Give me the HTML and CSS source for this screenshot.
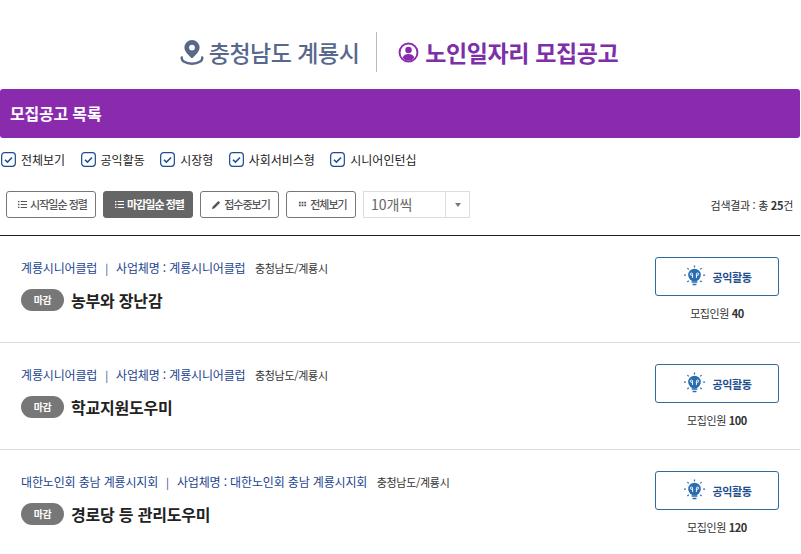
FILE: index.html
```html
<!DOCTYPE html>
<html lang="ko">
<head>
<meta charset="utf-8">
<title>모집공고</title>
<link rel="stylesheet" href="styles.css">
</head>
<body>
<svg class="defs" width="0" height="0">
  <symbol id="bulb" viewBox="0 0 24 24">
    <circle cx="12" cy="10.500" r="6.600" fill="#2a6db0"/>
    <path d="M9 17h6v1.600H9zM10 19.500h4V21h-4z" fill="#2a6db0"/>
    <path d="M10 13.500V9.500a1.200 1.200 0 1 0-1.600 1.200H10M14 13.500V9.500a1.200 1.200 0 1 1 1.600 1.200H14" fill="none" stroke="#fff" stroke-width="1"/>
    <path d="M12 0.500v2M4.600 3.200l1.400 1.400M19.400 3.200L18 4.600M1 10.500h2M21 10.500h2M4.600 17.800L6 16.400M19.400 17.800L18 16.400" stroke="#2a6db0" stroke-width="1.300" fill="none"/>
  </symbol>
  <symbol id="check" viewBox="0 0 16 16">
    <rect x="0.700" y="0.700" width="14.600" height="14.600" rx="3.200" fill="#fff" stroke="#1f4e8f" stroke-width="1.300"/>
    <path d="M4.200 8.200l2.700 2.600 4.900-5" fill="none" stroke="#1f4e8f" stroke-width="1.600"/>
  </symbol>
  <symbol id="listic" viewBox="0 0 10 10">
    <path d="M0 1h1.600v1.400H0zM0 4.300h1.600v1.400H0zM0 7.600h1.600V9H0zM3 1.200h7v1H3zM3 4.500h7v1H3zM3 7.800h7v1H3z" fill="currentColor"/>
  </symbol>
</svg>

<header class="title">
  <div class="region">
    <svg class="pin" viewBox="0 0 24 26" width="24" height="26">
      <path fill-rule="evenodd" d="M12 1a7.600 7.600 0 0 0-7.600 7.600c0 4.600 5 8.400 7.600 10.900 2.600-2.500 7.600-6.300 7.600-10.900A7.600 7.600 0 0 0 12 1zm0 4.700a2.900 2.900 0 1 1 0 5.800 2.900 2.900 0 0 1 0-5.800z" fill="#58688c"/>
      <path d="M1.800 18.500c-.8 3.200 3.700 6.200 10.200 6.200s11-3 10.200-6.200" fill="none" stroke="#58688c" stroke-width="2.400" stroke-linecap="round"/>
    </svg>
    <span>충청남도 계룡시</span>
  </div>
  <div class="divider"></div>
  <div class="notice">
    <svg class="person" viewBox="0 0 22 22" width="21" height="21">
      <circle cx="11" cy="11" r="9.400" fill="none" stroke="#8a2bae" stroke-width="2"/>
      <circle cx="11" cy="8.400" r="3.400" fill="#8a2bae"/>
      <path d="M4.800 16.500c1-3 3.400-4 6.200-4s5.200 1 6.200 4a8 8 0 0 1-12.400 0z" fill="#8a2bae"/>
    </svg>
    <span>노인일자리 모집공고</span>
  </div>
</header>

<h1 class="banner">모집공고 목록</h1>

<div class="filters">
  <label class="filter"><svg class="cb"><use href="#check"/></svg>전체보기</label>
  <label class="filter"><svg class="cb"><use href="#check"/></svg>공익활동</label>
  <label class="filter"><svg class="cb"><use href="#check"/></svg>시장형</label>
  <label class="filter"><svg class="cb"><use href="#check"/></svg>사회서비스형</label>
  <label class="filter"><svg class="cb"><use href="#check"/></svg>시니어인턴십</label>
</div>

<div class="toolbar">
  <button class="btn w-start"><svg class="ic"><use href="#listic"/></svg>시작일순 정렬</button>
  <button class="btn btn-on w-end"><svg class="ic"><use href="#listic"/></svg>마감일순 정렬</button>
  <button class="btn w-open"><svg class="ic" viewBox="0 0 10 10"><path d="M0 10l.6-2.600L7 1l2 2-6.400 6.400z" fill="currentColor"/></svg>접수중보기</button>
  <button class="btn w-all"><svg class="ic" viewBox="0 0 10 10"><path d="M1 2h2v2H1zM4 2h2v2H4zM7 2h2v2H7zM1 5h2v2H1zM4 5h2v2H4zM7 5h2v2H7z" fill="currentColor"/></svg>전체보기</button>
  <div class="select"><span class="select-val">10개씩</span><span class="select-arrow"><i></i></span></div>
  <div class="count">검색결과 : 총 <b>25</b>건</div>
</div>

<main class="list">
  <article class="item">
    <div class="info">
      <div class="meta"><span class="org">계룡시니어클럽</span><span class="sep">|</span><span class="org">사업체명 : 계룡시니어클럽</span><span class="area">충청남도/계룡시</span></div>
      <div class="head"><span class="tag">마감</span><span class="name">농부와 장난감</span></div>
    </div>
    <div class="side">
      <div class="kind"><svg class="bulb"><use href="#bulb"/></svg>공익활동</div>
      <div class="people">모집인원 <b>40</b></div>
    </div>
  </article>
  <article class="item">
    <div class="info">
      <div class="meta"><span class="org">계룡시니어클럽</span><span class="sep">|</span><span class="org">사업체명 : 계룡시니어클럽</span><span class="area">충청남도/계룡시</span></div>
      <div class="head"><span class="tag">마감</span><span class="name">학교지원도우미</span></div>
    </div>
    <div class="side">
      <div class="kind"><svg class="bulb"><use href="#bulb"/></svg>공익활동</div>
      <div class="people">모집인원 <b>100</b></div>
    </div>
  </article>
  <article class="item">
    <div class="info">
      <div class="meta"><span class="org">대한노인회 충남 계룡시지회</span><span class="sep">|</span><span class="org">사업체명 : 대한노인회 충남 계룡시지회</span><span class="area">충청남도/계룡시</span></div>
      <div class="head"><span class="tag">마감</span><span class="name">경로당 등 관리도우미</span></div>
    </div>
    <div class="side">
      <div class="kind"><svg class="bulb"><use href="#bulb"/></svg>공익활동</div>
      <div class="people">모집인원 <b>120</b></div>
    </div>
  </article>
</main>
</body>
</html>
```

FILE: styles.css
```css
* { box-sizing: border-box; }
html, body { margin: 0; padding: 0; }
body {
  width: 800px;
  height: 554px;
  overflow: hidden;
  background: #fff;
  color: #222;
  font-family: "Noto Sans CJK KR", "Noto Sans", sans-serif;
}
.defs { position: absolute; }

.title {
  height: 89px;
  display: flex;
  justify-content: center;
  align-items: center;
  padding: 15px 2px 0 0;
}
.region, .notice { display: flex; align-items: center; font-size: 23px; line-height: 30px; letter-spacing: -0.5px; }
.region { color: #58688c; font-weight: 500; gap: 5px; }
.notice { color: #7d2ea8; font-weight: 700; gap: 6px; letter-spacing: -0.4px; }
.divider { width: 1px; height: 40px; background: #bbb; margin: 0 21px 0 17px; }

.banner {
  margin: 0;
  height: 49px;
  background: #8a2bae;
  border-radius: 3px;
  color: #fff;
  font-size: 16px;
  font-weight: 700;
  line-height: 49px;
  padding-left: 10px;
  letter-spacing: -0.2px;
}

.filters {
  display: flex;
  align-items: center;
  height: 42px;
  padding-left: 1px;
  font-size: 12px;
  color: #222;
}
.filter { display: flex; align-items: center; gap: 5px; margin-right: 15.4px; }
.cb { width: 15px; height: 15px; }

.toolbar {
  display: flex;
  align-items: center;
  height: 37px;
  margin-top: 6px;
  padding: 0 7px 0 6px;
  gap: 7px;
}
.btn {
  height: 27px;
  border: 1px solid #777;
  border-radius: 3px;
  background: #fff;
  color: #555;
  font: 500 11px/25px "Noto Sans CJK KR", sans-serif;
  letter-spacing: -1px;
  padding: 0 0 0 3px;
  display: flex;
  align-items: center;
  justify-content: center;
  gap: 3px;
}
.btn-on { background: #666; border-color: #666; color: #fff; font-weight: 700; }
.w-start { width: 90px; }
.w-end { width: 90px; }
.w-open { width: 79px; }
.w-all { width: 70px; }
.ic { width: 9px; height: 9px; }
.select {
  width: 107px;
  height: 27px;
  border: 1px solid #ddd;
  display: flex;
  font-size: 14px;
  color: #666;
}
.select-val { flex: 1; padding-left: 7px; line-height: 25px; }
.select-arrow { width: 24px; border-left: 1px solid #ddd; display: flex; align-items: center; justify-content: center; }
.select-arrow i { width: 0; height: 0; border: 3.5px solid transparent; border-top: 4px solid #777; border-bottom: 0; }
.count { margin-left: auto; font-size: 11px; color: #333; letter-spacing: -0.3px; }
.count b { font-weight: 700; }

.list { border-top: 1px solid #222; margin-top: 12px; }
.item {
  height: 107px;
  border-bottom: 1px solid #ddd;
  display: flex;
  justify-content: space-between;
  padding: 22px 21px 0;
}
.meta { display: flex; align-items: center; font-size: 12px; line-height: 18px; color: #1a4590; letter-spacing: -0.15px; margin-top: 1px; }
.sep { margin: 0 8px; color: #1a4590; font-size: 11px; }
.area { margin-left: 9.5px; color: #333; font-size: 11px; letter-spacing: -0.3px; }
.head { display: flex; align-items: center; margin-top: 11px; }
.tag {
  width: 43px;
  height: 22px;
  border-radius: 11px;
  background: #777;
  color: #fff;
  font-size: 10px;
  font-weight: 700;
  letter-spacing: -0.5px;
  text-align: center;
  line-height: 21px;
}
.name { margin-left: 7px; font-size: 16px; font-weight: 700; color: #222; line-height: 22px; letter-spacing: -0.2px; padding-top: 1px; }
.side { width: 124px; display: flex; flex-direction: column; align-items: center; margin-top: -1px; }
.kind {
  width: 124px;
  height: 39px;
  border: 1px solid #2f6a9c;
  border-radius: 3px;
  display: flex;
  align-items: center;
  justify-content: center;
  gap: 7px;
  color: #1f4e8f;
  font-size: 11px;
  font-weight: 700;
  letter-spacing: -0.4px;
}
.bulb { width: 23px; height: 23px; }
.people { margin-top: 8px; font-size: 11px; line-height: 18px; color: #333; letter-spacing: -0.4px; }
.people b { font-weight: 700; }
```
